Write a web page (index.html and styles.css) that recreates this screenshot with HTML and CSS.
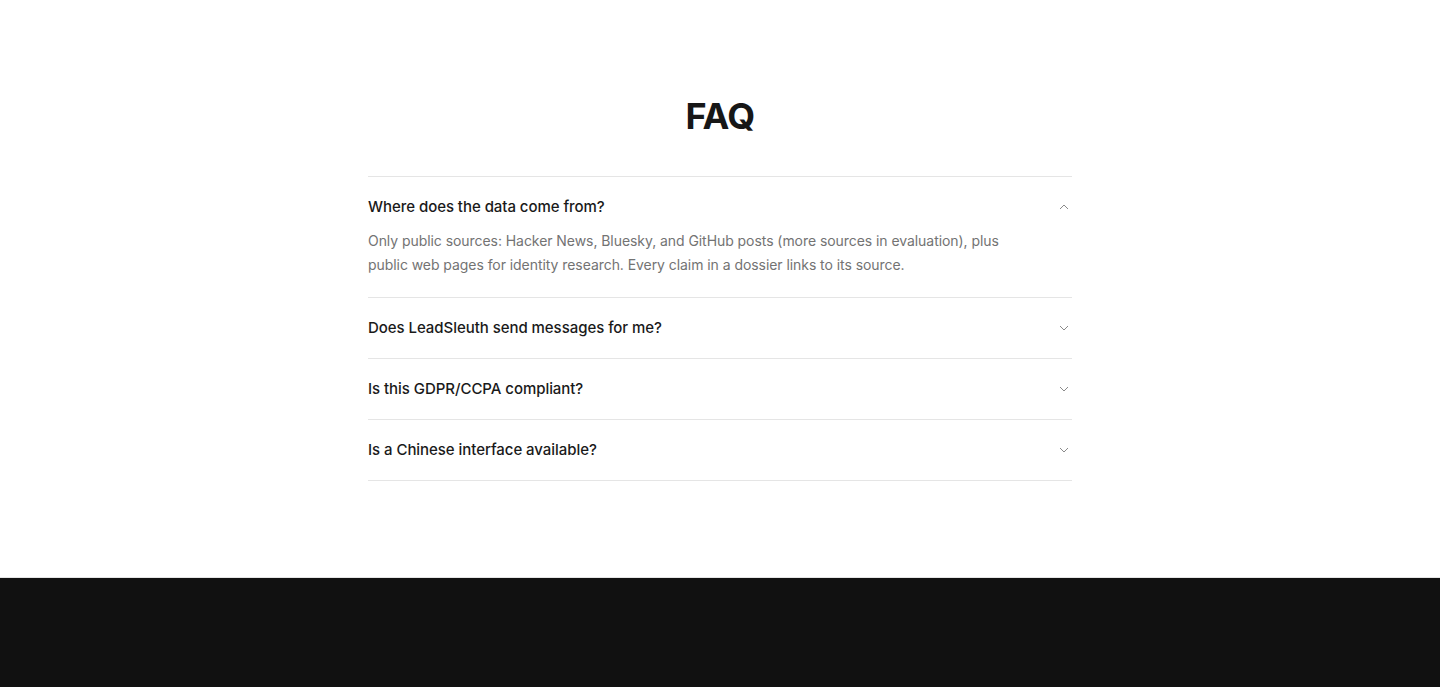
FILE: index.html
```html
<!DOCTYPE html>
<html lang="en">
<head>
    <meta charset="UTF-8">
    <meta name="viewport" content="width=device-width, initial-scale=1.0">
    <title>FAQ</title>
    <link rel="stylesheet" href="styles.css">
</head>
<body>
    <section class="faq">
        <h2>FAQ</h2>
        <div class="faq-list">
            <div class="faq-item open">
                <button class="faq-q">
                    <span>Where does the data come from?</span>
                    <svg viewBox="0 0 24 24" class="chev"><path d="m6 15 6-6 6 6"/></svg>
                </button>
                <p class="faq-a">Only public sources: Hacker News, Bluesky, and GitHub posts (more sources in evaluation), plus public web pages for identity research. Every claim in a dossier links to its source.</p>
            </div>
            <div class="faq-item">
                <button class="faq-q">
                    <span>Does LeadSleuth send messages for me?</span>
                    <svg viewBox="0 0 24 24" class="chev"><path d="m6 9 6 6 6-6"/></svg>
                </button>
            </div>
            <div class="faq-item">
                <button class="faq-q">
                    <span>Is this GDPR/CCPA compliant?</span>
                    <svg viewBox="0 0 24 24" class="chev"><path d="m6 9 6 6 6-6"/></svg>
                </button>
            </div>
            <div class="faq-item">
                <button class="faq-q">
                    <span>Is a Chinese interface available?</span>
                    <svg viewBox="0 0 24 24" class="chev"><path d="m6 9 6 6 6-6"/></svg>
                </button>
            </div>
        </div>
    </section>
    <footer class="footer"></footer>
</body>
</html>
```

FILE: styles.css
```css
body {
    font-family: 'Inter', 'Liberation Sans', sans-serif;
    margin: 0;
    background-color: #ffffff;
    color: #171717;
}
.faq {
    max-width: 704px;
    margin: 0 auto;
    padding: 96px 0;
}
.faq h2 {
    margin: 0 0 40px;
    font-size: 36px;
    line-height: 40px;
    font-weight: 700;
    text-align: center;
    letter-spacing: -0.7px;
    color: #171717;
}
.faq-list {
    border-top: 1px solid #e5e5e5;
}
.faq-item {
    border-bottom: 1px solid #e5e5e5;
}
.faq-q {
    display: flex;
    width: 100%;
    align-items: center;
    justify-content: space-between;
    padding: 20px 0;
    border: 0;
    background: none;
    font-family: inherit;
    font-size: 15px;
    line-height: 20px;
    font-weight: 500;
    letter-spacing: -0.05px;
    color: #1a1a1a;
    text-align: left;
    cursor: pointer;
}
.faq-item.open .faq-q {
    padding-bottom: 12px;
}
.chev {
    width: 16px;
    height: 16px;
    flex-shrink: 0;
    fill: none;
    stroke: #8a8a8a;
    stroke-width: 1.5;
}
.faq-a {
    margin: 0;
    padding: 0 0 20px;
    max-width: 640px;
    font-size: 14px;
    line-height: 24px;
    letter-spacing: -0.06px;
    color: #737373;
}
.footer {
    background-color: #111111;
    border-top: 1px solid #e5e5e5;
    height: 300px;
}
```
